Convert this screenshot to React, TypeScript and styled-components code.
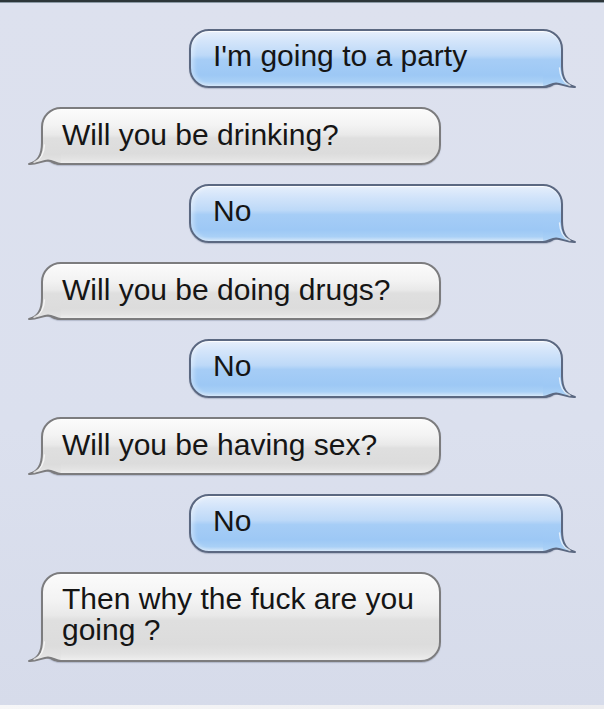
import React from "react";
import styled, { createGlobalStyle, css } from "styled-components";

const GlobalStyle = createGlobalStyle`
  html, body {
    margin: 0;
    padding: 0;
    background: #dbe0ee;
  }
  #root {
    width: 604px;
    height: 709px;
  }
`;

type Side = "sent" | "received";

const Screen = styled.div`
  width: 604px;
  height: 709px;
  display: flex;
  flex-direction: column;
  overflow: hidden;
  background: linear-gradient(to bottom, #dde1ee 0%, #dbe0ee 60%, #d6dbea 100%);
  font-family: "Liberation Sans", Arial, Helvetica, sans-serif;
`;

const TopBar = styled.div`
  height: 2px;
  flex: none;
  background: #2d3639;
  border-bottom: 1px solid #8c9aa6;
`;

const Thread = styled.div`
  flex: 1;
  display: flex;
  flex-direction: column;
  gap: 19px;
  padding-top: 26px;
`;

const BottomStrip = styled.div`
  height: 4px;
  flex: none;
  background: linear-gradient(to right, #f7f7f8, #ececef);
`;

const Row = styled.div<{ $side: Side }>`
  display: flex;
  justify-content: ${(p) => (p.$side === "sent" ? "flex-end" : "flex-start")};
  padding: ${(p) => (p.$side === "sent" ? "0 41px 0 0" : "0 0 0 41px")};
`;

const SENT_STOPS: [number, string][] = [
  [0, "#e6effb"],
  [0.18, "#d4e5fa"],
  [0.44, "#bdd9f8"],
  [0.52, "#a6cdf6"],
  [0.8, "#9dc8f5"],
  [0.92, "#a9d0f6"],
  [1, "#cde3f9"],
];

const RECEIVED_STOPS: [number, string][] = [
  [0, "#fbfbfb"],
  [0.3, "#f3f3f3"],
  [0.48, "#e9e9e9"],
  [0.54, "#dfdfdf"],
  [0.82, "#dcdcdc"],
  [0.93, "#e3e3e3"],
  [1, "#eeeeee"],
];

const toCss = (stops: [number, string][]) =>
  stops.map(([o, c]) => `${c} ${Math.round(o * 100)}%`).join(", ");

const sentSkin = css`
  width: 374px;
  height: 59px;
  padding: 10px 20px 0 22px;
  border-color: #5b6881;
  background: linear-gradient(to bottom, ${toCss(SENT_STOPS)});
  box-shadow: inset 0 1px 0 rgba(255, 255, 255, 0.8),
    inset 3px 0 4px rgba(255, 255, 255, 0.35), 0 1px 1px rgba(60, 70, 100, 0.25);
`;

const receivedSkin = css`
  width: 400px;
  height: 58px;
  padding: 11px 20px 0 19px;
  border-color: #7c7c7e;
  background: linear-gradient(to bottom, ${toCss(RECEIVED_STOPS)});
  box-shadow: inset 0 1px 0 rgba(255, 255, 255, 0.9), 0 1px 1px rgba(60, 70, 100, 0.25);
`;

const Bubble = styled.div<{ $side: Side; $tall?: boolean }>`
  position: relative;
  box-sizing: border-box;
  border: 2px solid;
  border-radius: 20px;
  font-size: 30px;
  line-height: 29px;
  color: #151515;
  background-origin: border-box;
  ${(p) => (p.$side === "sent" ? sentSkin : receivedSkin)}
  ${(p) =>
    p.$tall &&
    css`
      height: 90px;
      padding-top: 9px;
      line-height: 31px;
    `}
`;

const TailSvg = styled.svg<{ $side: Side }>`
  position: absolute;
  bottom: -2px;
  width: 34px;
  height: 34px;
  overflow: visible;
  ${(p) =>
    p.$side === "sent"
      ? css`
          right: -16px;
        `
      : css`
          left: -16px;
          transform: scaleX(-1);
        `}
`;

const Tail: React.FC<{ side: Side; height: number; id: string }> = ({ side, height, id }) => {
  const stroke = side === "sent" ? "#5b6881" : "#7c7c7e";
  const stops = side === "sent" ? SENT_STOPS : RECEIVED_STOPS;
  return (
    <TailSvg $side={side} viewBox="0 0 34 34" aria-hidden="true">
      <defs>
        <linearGradient
          id={id}
          x1="0"
          y1={34 - height}
          x2="0"
          y2="34"
          gradientUnits="userSpaceOnUse"
        >
          {stops.map(([o, c]) => (
            <stop key={o} offset={o} stopColor={c} />
          ))}
        </linearGradient>
      </defs>
      <path
        d="M0 0 H19 V12 C19 24 23 31 32 33 C25 33.5 19 30 13 29.5 C8 29.5 5 33 0 33 Z"
        fill={`url(#${id})`}
      />
      <path
        d="M19 0 V12 C19 24 23 31 32 33 C25 33.5 19 30 13 29.5 C8 29.5 5 33 0 33"
        fill="none"
        stroke={stroke}
        strokeWidth="2"
        strokeLinejoin="round"
      />
      <path
        d="M16.5 14 C17 23 21 29 27 31.5"
        fill="none"
        stroke="rgba(255,255,255,0.7)"
        strokeWidth="1.4"
        strokeLinecap="round"
      />
    </TailSvg>
  );
};

const messages: { side: Side; text: string; tall?: boolean }[] = [
  { side: "sent", text: "I'm going to a party" },
  { side: "received", text: "Will you be drinking?" },
  { side: "sent", text: "No" },
  { side: "received", text: "Will you be doing drugs?" },
  { side: "sent", text: "No" },
  { side: "received", text: "Will you be having sex?" },
  { side: "sent", text: "No" },
  { side: "received", text: "Then why the fuck are you going ?", tall: true },
];

export default function App() {
  return (
    <>
      <GlobalStyle />
      <Screen>
        <TopBar />
        <Thread>
          {messages.map((m, i) => {
            const h = m.tall ? 90 : m.side === "sent" ? 59 : 58;
            return (
              <Row key={i} $side={m.side}>
                <Bubble $side={m.side} $tall={m.tall}>
                  {m.text}
                  <Tail side={m.side} height={h} id={`tail-grad-${i}`} />
                </Bubble>
              </Row>
            );
          })}
        </Thread>
        <BottomStrip />
      </Screen>
    </>
  );
}
